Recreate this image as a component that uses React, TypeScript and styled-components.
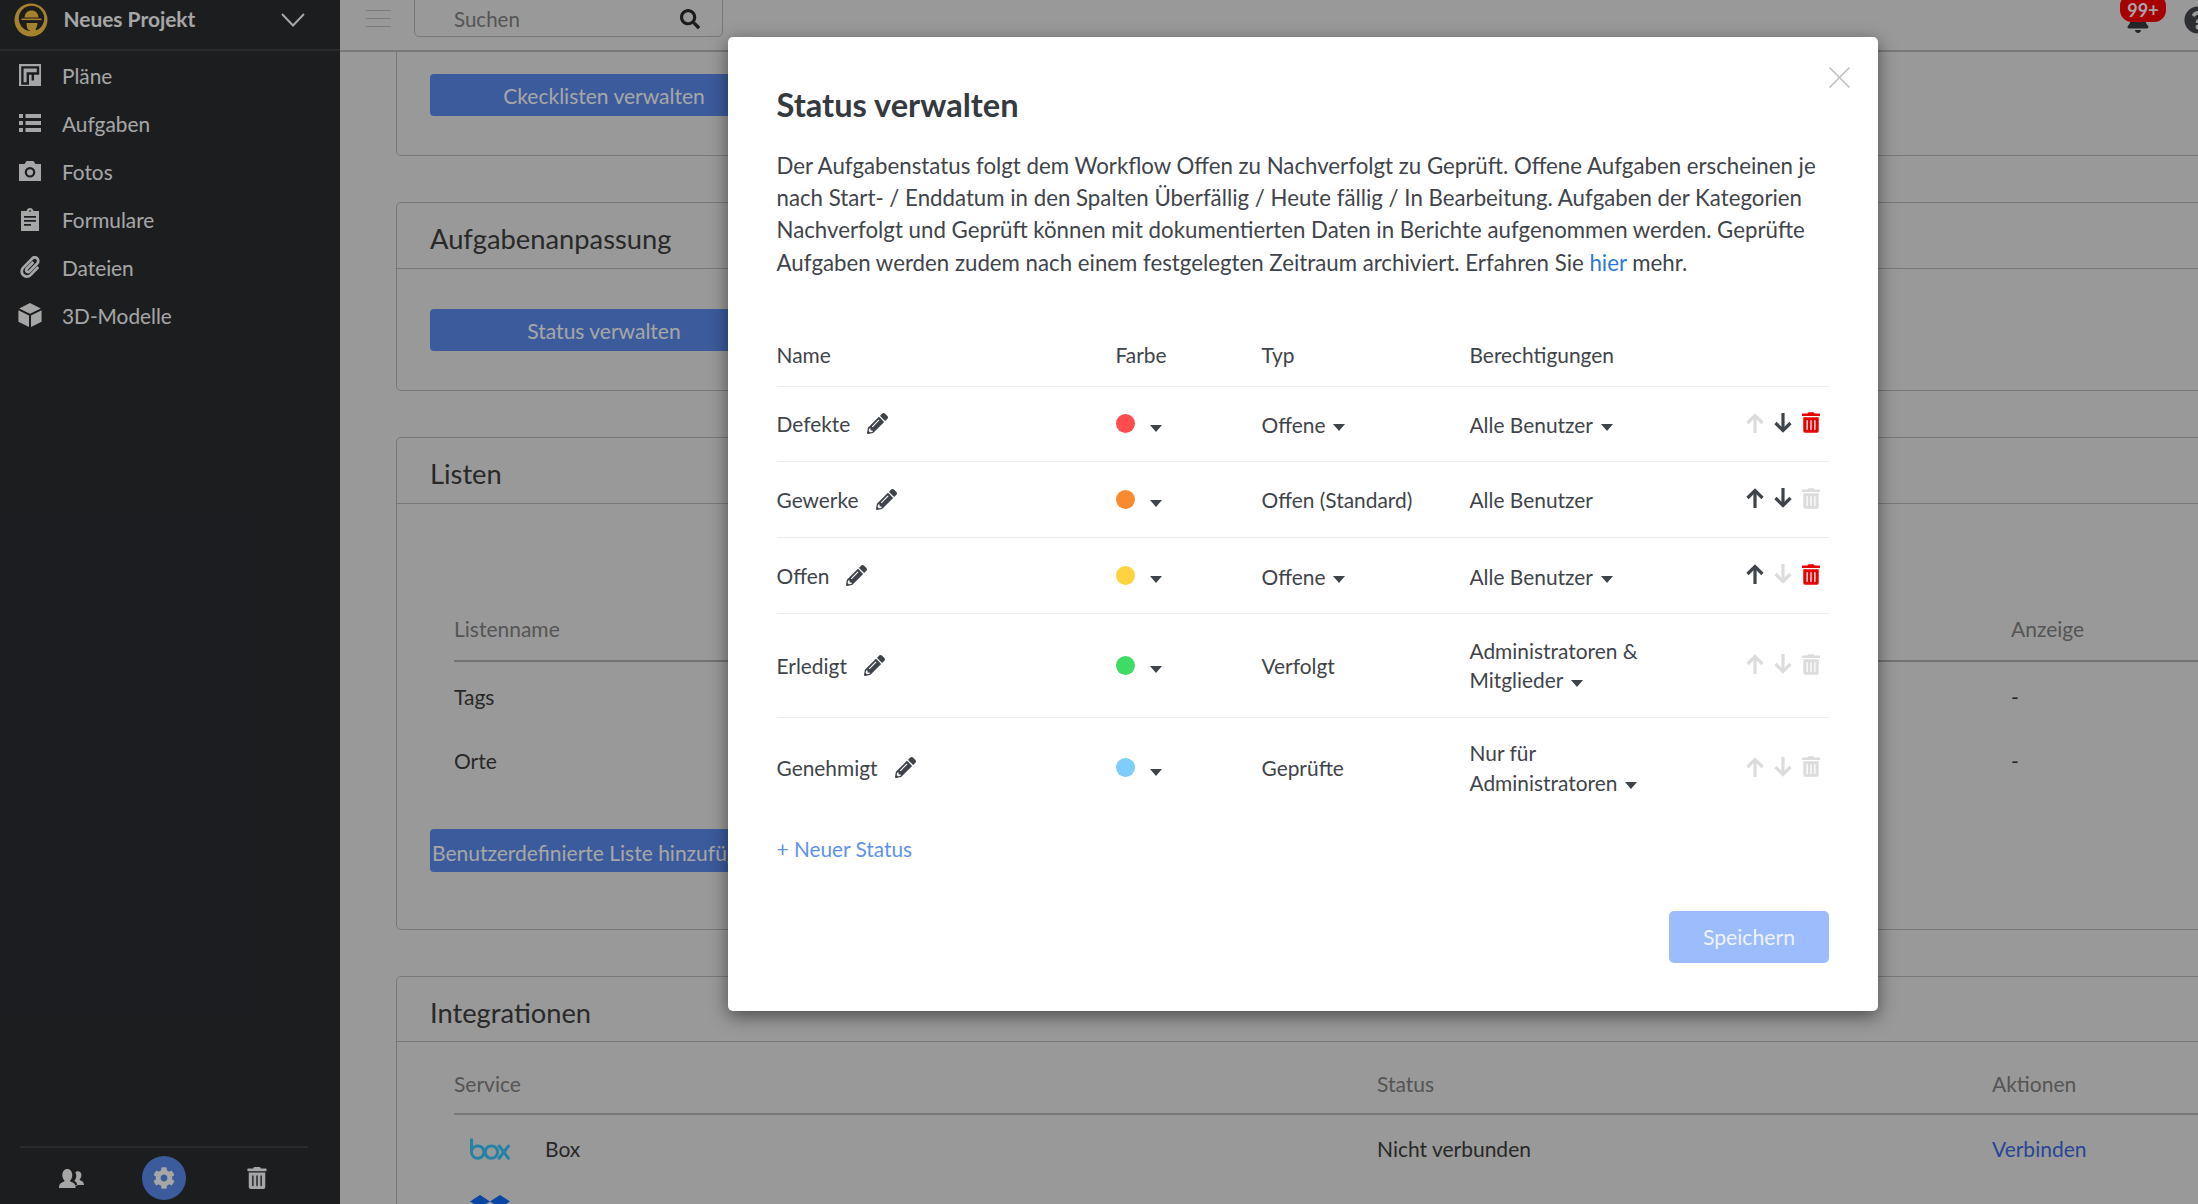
import React from "react";
import styled, { createGlobalStyle } from "styled-components";
import {
  FaBell,
  FaCog,
  FaPaperclip,
  FaPencilAlt,
  FaQuestionCircle,
  FaSearch,
  FaTrashAlt,
} from "react-icons/fa";
import { SiBox, SiDropbox } from "react-icons/si";

const Global = createGlobalStyle`
  html, body { margin: 0; padding: 0; height: 100%; overflow: hidden; background: #ebebeb; }
  body { font-family: Lato, "Liberation Sans", sans-serif; color: #3e3e3e; }
  * { box-sizing: border-box; }
`;

const Page = styled.div`
  position: relative;
  display: grid;
  grid-template-columns: 340px 1fr;
  width: 2198px;
  height: 1204px;
  overflow: hidden;
`;

/* ---------- Sidebar ---------- */
const Sidebar = styled.aside`
  display: flex;
  flex-direction: column;
  background: #2b2d31;
  color: #fff;
  height: 100%;
`;
const ProjectBar = styled.div`
  display: flex;
  align-items: center;
  height: 51px;
  padding: 0 35px 10px 14px;
  border-bottom: 2px solid #3f4146;
`;
const ProjectName = styled.span`
  margin-left: 15.5px;
  padding-bottom: 2px;
  font-size: 20.9px;
  font-weight: 700;
  flex: 1;
`;
const Nav = styled.nav`
  display: flex;
  flex-direction: column;
`;
const NavItem = styled.a`
  display: flex;
  align-items: center;
  height: 48px;
  padding-left: 17px;
  font-size: 20.8px;
  color: #fff;
`;
const NavIcon = styled.span`
  display: flex;
  justify-content: center;
  align-items: center;
  width: 26px;
  margin-right: 19px;
  font-size: 22px;
`;
const SideFooter = styled.div`
  margin: auto 32px 0 20px;
  height: 58px;
  border-top: 2px solid #3f4146;
  display: flex;
  justify-content: center;
  align-items: center;
  padding-top: 4px;
  color: #fff;
`;
const FooterSlot = styled.div<{ $active?: boolean }>`
  display: flex;
  align-items: center;
  justify-content: center;
  width: 92.5px;
  font-size: 22px;
  & > span {
    display: flex;
    width: 44px;
    height: 44px;
    align-items: center;
    justify-content: center;
    border-radius: 50%;
    background: ${(p) => (p.$active ? "#5c8df0" : "transparent")};
  }
`;

/* ---------- Main ---------- */
const Main = styled.main`
  display: flex;
  flex-direction: column;
  min-width: 0;
  height: 1204px;
  overflow: hidden;
  background: #ebebeb;
`;
const TopBar = styled.header`
  flex: none;
  display: flex;
  align-items: flex-start;
  height: 52px;
  border-bottom: 2px solid #b9b9b9;
  padding-left: 26px;
`;
const Burger = styled.div`
  display: flex;
  flex-direction: column;
  justify-content: space-between;
  width: 25px;
  height: 17px;
  margin-top: 10px;
  & > i {
    display: block;
    height: 1px;
    background: #bdbdbd;
  }
`;
const SearchBox = styled.div`
  display: flex;
  align-items: center;
  justify-content: space-between;
  width: 309px;
  height: 42px;
  margin: -5px 0 0 23px;
  padding: 5px 22px 0 39px;
  border: 1px solid #b9b9b9;
  border-radius: 5px;
  color: #838383;
  font-size: 20.5px;
  & > svg {
    color: #2a2a2a;
    font-size: 20px;
  }
`;
const BellWrap = styled.div`
  position: relative;
  margin: 9px 0 0 auto;
  width: 24px;
  height: 24px;
  font-size: 24px;
  color: #363a40;
`;
const Badge = styled.span`
  position: absolute;
  left: -6px;
  top: -15px;
  width: 46px;
  height: 28px;
  border-radius: 12px;
  background: #ff0000;
  color: #fff;
  font-size: 18px;
  font-weight: 700;
  display: flex;
  align-items: flex-end;
  justify-content: center;
  padding-bottom: 1px;
`;
const HelpIcon = styled.span`
  margin: 6px -14px 0 34px;
  font-size: 28px;
  line-height: 28px;
  height: 28px;
  color: #45494f;
`;
const Scroll = styled.div`
  flex: 1;
  min-height: 0;
  overflow: hidden;
  display: flex;
  flex-direction: column;
  gap: 46px;
  padding-left: 56px;
`;
const Card = styled.section<{ $clipTop?: boolean }>`
  flex: none;
  width: 1900px;
  border: 1px solid #b9b9b9;
  border-radius: 5px;
  margin-top: ${(p) => (p.$clipTop ? "-19px" : "0")};
`;
const CardHead = styled.h2<{ $h: number }>`
  margin: 0;
  height: ${(p) => p.$h}px;
  display: flex;
  align-items: center;
  padding: 6px 0 0 33px;
  font-size: 27.3px;
  font-weight: 400;
  color: #404040;
  border-bottom: 1px solid #b9b9b9;
`;
const CardBody = styled.div`
  padding: 40px 33px 39px;
`;
const ManageButton = styled.button`
  display: block;
  width: 348px;
  height: 42px;
  border: 0;
  border-radius: 4px;
  padding: 0 2px;
  background: #5c8df0;
  color: #fff;
  font: 400 21px Lato, "Liberation Sans", sans-serif;
  white-space: nowrap;
  overflow: hidden;
`;
const AddListButton = styled(ManageButton)`
  margin: 37px 0 18px;
  height: 43px;
  padding-top: 4px;
  text-align: left;
`;
const ListHead = styled.div`
  display: grid;
  grid-template-columns: 1557px 1fr;
  align-items: center;
  margin: 62px 0 2px 24px;
  height: 56px;
  border-bottom: 2px solid #b0b0b0;
  padding-bottom: 10px;
  font-size: 21px;
  color: #838383;
`;
const ListRow = styled.div`
  display: grid;
  grid-template-columns: 1557px 1fr;
  align-items: center;
  margin-left: 24px;
  height: 64px;
  font-size: 21px;
  color: #3e3e3e;
`;
const ServiceBody = styled.div`
  padding: 0 33px;
`;
const ServiceHead = styled.div`
  display: grid;
  grid-template-columns: 923px 615px 1fr;
  align-items: center;
  margin: 0 0 2px 24px;
  height: 73px;
  border-bottom: 2px solid #b9b9b9;
  padding-top: 11px;
  font-size: 21px;
  color: #838383;
`;
const ServiceRow = styled.div`
  display: grid;
  grid-template-columns: 923px 615px 1fr;
  align-items: center;
  margin-left: 24px;
  height: 63px;
  font-size: 21px;
  color: #3e3e3e;
`;
const ServiceName = styled.div`
  display: flex;
  align-items: center;
  gap: 35px;
  padding-left: 16px;
`;
const ServiceLogo = styled.span<{ $color: string }>`
  display: flex;
  width: 40px;
  height: 40px;
  align-items: center;
  justify-content: center;
  color: ${(p) => p.$color};
  font-size: 40px;
`;
const ConnectLink = styled.a`
  color: #3d6be6;
`;

/* ---------- Modal ---------- */
const Backdrop = styled.div`
  position: absolute;
  inset: 0;
  background: rgba(0, 0, 0, 0.35);
`;
const Modal = styled.div`
  position: absolute;
  left: 728px;
  top: 37px;
  width: 1150px;
  height: 974px;
  display: flex;
  flex-direction: column;
  padding: 0 49px 0 48.5px;
  background: #fff;
  border-radius: 5px;
  box-shadow: 0 5px 18px rgba(0, 0, 0, 0.5);
  color: #3f444a;
  font-size: 20.9px;
`;
const CloseButton = styled.button`
  position: absolute;
  right: 28px;
  top: 30px;
  width: 21px;
  height: 21px;
  padding: 0;
  border: 0;
  background: none;
  display: block;
`;
const ModalTitle = styled.h1`
  margin: 47px 0 0;
  font-size: 32.6px;
  line-height: 42px;
  font-weight: 700;
  color: #343a40;
`;
const Intro = styled.p`
  margin: 24px 0 0;
  font-size: 22.25px;
  line-height: 32.2px;
  color: #3f444a;
`;
const IntroLink = styled.a`
  color: #2f78d8;
`;
const TableHead = styled.div`
  display: grid;
  grid-template-columns: 339px 146px 208px 1fr;
  align-items: center;
  margin-top: 43px;
  height: 65px;
  border-bottom: 1px solid #ececec;
  padding-top: 1px;
`;
const Row = styled.div<{ $h: number; $last?: boolean }>`
  display: grid;
  grid-template-columns: 339px 146px 208px 1fr 90px;
  align-items: center;
  height: ${(p) => p.$h}px;
  border-bottom: ${(p) => (p.$last ? "0" : "1px solid #ececec")};
  line-height: 29.5px;
`;
const NameCell = styled.div`
  display: flex;
  align-items: center;
`;
const PencilIcon = styled.span`
  display: flex;
  margin-left: 17px;
  font-size: 21px;
  color: #3f444a;
`;
const ColorCell = styled.div`
  display: flex;
  align-items: center;
`;
const Dot = styled.span<{ $c: string }>`
  width: 19px;
  height: 19px;
  border-radius: 50%;
  background: ${(p) => p.$c};
  margin-right: 15px;
`;
const Caret = styled.i`
  display: inline-block;
  width: 0;
  height: 0;
  border-left: 6.5px solid transparent;
  border-right: 6.5px solid transparent;
  border-top: 7px solid #3f444a;
  vertical-align: middle;
  margin-left: 8px;
`;
const ColorCaret = styled(Caret)`
  margin: 9px 0 0;
`;
const TypeCell = styled.div<{ $drop: boolean }>`
  padding-top: ${(p) => (p.$drop ? "2px" : "0")};
`;
const PermCell = styled.div<{ $shift: boolean }>`
  max-width: 190px;
  padding-top: ${(p) => (p.$shift ? "2px" : "0")};
`;
const Actions = styled.div`
  display: flex;
  align-items: center;
  justify-content: flex-end;
  gap: 10px;
  padding: 0 9px 2px 0;
`;
const ArrowIcon = styled.svg<{ $on: boolean }>`
  width: 18px;
  height: 20px;
  color: ${(p) => (p.$on ? "#3f444a" : "#dcdcdc")};
`;
const TrashBtn = styled.span<{ $on: boolean }>`
  display: flex;
  color: ${(p) => (p.$on ? "#e60000" : "#dcdcdc")};
  & > svg {
    width: 18px;
    height: 21px;
  }
`;
const NewStatus = styled.a`
  margin-top: 16px;
  line-height: 30px;
  font-size: 20.8px;
  color: #5e92ef;
`;
const Footer = styled.div`
  display: flex;
  justify-content: flex-end;
  margin-top: 47px;
`;
const SaveButton = styled.button`
  width: 160px;
  height: 52px;
  border: 0;
  border-radius: 5px;
  background: #9dbcfc;
  color: #eef3ff;
  font: 400 21.2px Lato, "Liberation Sans", sans-serif;
`;

/* ---------- Drawings ---------- */
const Logo = () => (
  <svg width="34" height="34" viewBox="0 0 34 34" aria-hidden="true">
    <circle cx="17" cy="17" r="16.5" fill="#ffc846" />
    <circle cx="17.5" cy="15.5" r="12.7" fill="#2b2d31" />
    <path d="M10.500 14.500C11 10 13.500 7.500 17.500 7.500S24 10 24.500 14.500z" fill="#ffc846" />
    <path d="M7.500 15.500h20v1.600h-20z" fill="#ffc846" />
    <path d="M12.500 20h11c0 2.500-.8 4.800-2.100 6.300l3.600 4.200c-2 1.500-3.500 2.200-5.500 2.400l-4-5.400-1.500-1C13 25 12.500 22.500 12.500 20z" fill="#ffc846" />
  </svg>
);
const PlanIcon = () => (
  <svg width="22" height="22" viewBox="0 0 22 22" aria-hidden="true">
    <rect width="22" height="22" fill="currentColor" />
    <path d="M3.400 19.500V3.400H19V9.500H8.800V19.500zM13.800 9.500V16.500" fill="none" stroke="#2b2d31" strokeWidth="2.400" />
  </svg>
);
const ListIcon = () => (
  <svg width="22" height="18" viewBox="0 0 22 18" aria-hidden="true">
    <path
      fill="currentColor"
      d="M0 0h4v4H0zM6.500 0H22v4H6.500zM0 7h4v4H0zM6.500 7H22v4H6.500zM0 14h4v4H0zM6.500 14H22v4H6.500z"
    />
  </svg>
);
const CameraIcon = () => (
  <svg width="22" height="22" viewBox="0 0 22 22" aria-hidden="true">
    <path
      fill="currentColor"
      fillRule="evenodd"
      d="M0 4h5.500l2-3h7l2 3H22v17H0zM11 7a5.300 5.300 0 100 10.600A5.300 5.300 0 0011 7zm0 2.200a3.100 3.100 0 110 6.200 3.100 3.100 0 010-6.200z"
    />
  </svg>
);
const ClipboardIcon = () => (
  <svg width="18" height="23" viewBox="0 0 18 23" aria-hidden="true">
    <path
      fill="currentColor"
      fillRule="evenodd"
      d="M0 3h5.500C6 1 7.300 0 9 0s3 1 3.500 3H18v20H0zM7.600 3.600h2.800C10 2.600 9.600 2.200 9 2.200s-1 .4-1.400 1.400zM3 8v1.800h12V8zm0 4v1.800h12V12zm0 4v1.800h7V16z"
    />
  </svg>
);
const CubeIcon = () => (
  <svg width="24" height="24" viewBox="0 0 24 24" aria-hidden="true">
    <path
      fill="currentColor"
      d="M12 0l10.800 5.400L12 10.800 1.200 5.400zM.4 7.200l10.600 5.300V24L.4 18.700zM23.600 7.200L13 12.500V24l10.600-5.300z"
    />
  </svg>
);
const PeopleIcon = () => (
  <svg width="25" height="19" viewBox="0 0 25 19" aria-hidden="true">
    <path
      fill="currentColor"
      d="M15 16c.6-.1 1.400-.1 2-.1h8c0-3-1.600-3.800-3.600-4.500l-1-.7c1.300-1.300 2-2.800 2-4.400 0-2.400-1.500-4-3.600-4-1 0-1.900.4-2.500 1 .7 1 1 2.200 1 3.500 0 2-.7 3.800-2 5.200 2 .8 3 2.500 3 5z"
    />
    <path
      fill="currentColor"
      d="M0 19c0-4 1.800-5.100 4.200-6l1.600-1C4.200 10.500 3.300 8.500 3.300 6.300 3.300 2.600 5.400 0 8.300 0s5 2.600 5 6.300c0 2.200-.9 4.200-2.500 5.700l1.600 1c2.400.9 4.200 2 4.200 6z"
    />
  </svg>
);
const Arrow = ({ up, on }: { up?: boolean; on: boolean }) => (
  <ArrowIcon $on={on} viewBox="0 0 18 20" aria-hidden="true">
    <g
      fill="none"
      stroke="currentColor"
      strokeWidth="3.200"
      transform={up ? undefined : "rotate(180 9 10)"}
    >
      <path d="M9 20V2.500" />
      <path d="M1.500 10L9 2.500 16.500 10" />
    </g>
  </ArrowIcon>
);

type Status = {
  name: string;
  color: string;
  type: string;
  typeDrop: boolean;
  perm: string;
  permDrop: boolean;
  shiftPerm: boolean;
  up: boolean;
  down: boolean;
  del: boolean;
  h: number;
};

const statuses: Status[] = [
  { name: "Defekte", color: "#ff4d4f", type: "Offene", typeDrop: true, perm: "Alle Benutzer", permDrop: true, shiftPerm: true, up: false, down: true, del: true, h: 75 },
  { name: "Gewerke", color: "#fa8a2e", type: "Offen (Standard)", typeDrop: false, perm: "Alle Benutzer", permDrop: false, shiftPerm: false, up: true, down: true, del: false, h: 76 },
  { name: "Offen", color: "#ffd23f", type: "Offene", typeDrop: true, perm: "Alle Benutzer", permDrop: true, shiftPerm: true, up: true, down: false, del: true, h: 76 },
  { name: "Erledigt", color: "#3fdc63", type: "Verfolgt", typeDrop: false, perm: "Administratoren & Mitglieder", permDrop: true, shiftPerm: false, up: false, down: false, del: false, h: 104 },
  { name: "Genehmigt", color: "#7fcdfb", type: "Geprüfte", typeDrop: false, perm: "Nur für Administratoren", permDrop: true, shiftPerm: false, up: false, down: false, del: false, h: 100 },
];

const navItems: { label: string; icon: React.ReactNode }[] = [
  { label: "Pläne", icon: <PlanIcon /> },
  { label: "Aufgaben", icon: <ListIcon /> },
  { label: "Fotos", icon: <CameraIcon /> },
  { label: "Formulare", icon: <ClipboardIcon /> },
  { label: "Dateien", icon: <FaPaperclip /> },
  { label: "3D-Modelle", icon: <CubeIcon /> },
];

export default function App() {
  return (
    <>
      <Global />
      <Page>
        <Sidebar>
          <ProjectBar>
            <Logo />
            <ProjectName>Neues Projekt</ProjectName>
            <svg width="24" height="14" viewBox="0 0 24 14" aria-hidden="true">
              <path d="M1 1l11 11.500L23 1" fill="none" stroke="#fff" strokeWidth="2" />
            </svg>
          </ProjectBar>
          <Nav>
            {navItems.map((n) => (
              <NavItem key={n.label}>
                <NavIcon>{n.icon}</NavIcon>
                {n.label}
              </NavItem>
            ))}
          </Nav>
          <SideFooter>
            <FooterSlot>
              <span>
                <PeopleIcon />
              </span>
            </FooterSlot>
            <FooterSlot $active>
              <span>
                <FaCog />
              </span>
            </FooterSlot>
            <FooterSlot>
              <span>
                <FaTrashAlt />
              </span>
            </FooterSlot>
          </SideFooter>
        </Sidebar>

        <Main>
          <TopBar>
            <Burger>
              <i />
              <i />
              <i />
            </Burger>
            <SearchBox>
              Suchen
              <FaSearch />
            </SearchBox>
            <BellWrap>
              <FaBell />
              <Badge>99+</Badge>
            </BellWrap>
            <HelpIcon>
              <FaQuestionCircle />
            </HelpIcon>
          </TopBar>
          <Scroll>
            <Card $clipTop>
              <CardBody>
                <ManageButton>Ckecklisten verwalten</ManageButton>
              </CardBody>
            </Card>
            <Card>
              <CardHead $h={66}>Aufgabenanpassung</CardHead>
              <CardBody>
                <ManageButton>Status verwalten</ManageButton>
              </CardBody>
            </Card>
            <Card>
              <CardHead $h={66}>Listen</CardHead>
              <CardBody>
                <ListHead>
                  <span>Listenname</span>
                  <span>Anzeige</span>
                </ListHead>
                <ListRow>
                  <span>Tags</span>
                  <span>-</span>
                </ListRow>
                <ListRow>
                  <span>Orte</span>
                  <span>-</span>
                </ListRow>
                <AddListButton>Benutzerdefinierte Liste hinzufügen</AddListButton>
              </CardBody>
            </Card>
            <Card>
              <CardHead $h={65}>Integrationen</CardHead>
              <ServiceBody>
                <ServiceHead>
                  <span>Service</span>
                  <span>Status</span>
                  <span>Aktionen</span>
                </ServiceHead>
                <ServiceRow>
                  <ServiceName>
                    <ServiceLogo $color="#36c8ff">
                      <SiBox />
                    </ServiceLogo>
                    Box
                  </ServiceName>
                  <span>Nicht verbunden</span>
                  <ConnectLink>Verbinden</ConnectLink>
                </ServiceRow>
                <ServiceRow>
                  <ServiceName>
                    <ServiceLogo $color="#0f6cff">
                      <SiDropbox />
                    </ServiceLogo>
                    Dropbox
                  </ServiceName>
                  <span>Nicht verbunden</span>
                  <ConnectLink>Verbinden</ConnectLink>
                </ServiceRow>
              </ServiceBody>
            </Card>
          </Scroll>
        </Main>

        <Backdrop />
        <Modal>
          <CloseButton aria-label="Schließen">
            <svg width="21" height="21" viewBox="0 0 21 21" aria-hidden="true">
              <path d="M.5.5l20 20M20.5.5l-20 20" stroke="#bdbdbd" strokeWidth="1.5" fill="none" />
            </svg>
          </CloseButton>
          <ModalTitle>Status verwalten</ModalTitle>
          <Intro>
            Der Aufgabenstatus folgt dem Workflow Offen zu Nachverfolgt zu Geprüft. Offene Aufgaben erscheinen je
            nach Start- / Enddatum in den Spalten Überfällig / Heute fällig / In Bearbeitung. Aufgaben der Kategorien
            Nachverfolgt und Geprüft können mit dokumentierten Daten in Berichte aufgenommen werden. Geprüfte
            Aufgaben werden zudem nach einem festgelegten Zeitraum archiviert. Erfahren Sie <IntroLink>hier</IntroLink>{" "}
            mehr.
          </Intro>
          <TableHead>
            <span>Name</span>
            <span>Farbe</span>
            <span>Typ</span>
            <span>Berechtigungen</span>
          </TableHead>
          {statuses.map((s, i) => (
            <Row key={s.name} $h={s.h} $last={i === statuses.length - 1}>
              <NameCell>
                {s.name}
                <PencilIcon>
                  <FaPencilAlt />
                </PencilIcon>
              </NameCell>
              <ColorCell>
                <Dot $c={s.color} />
                <ColorCaret />
              </ColorCell>
              <TypeCell $drop={s.typeDrop}>
                {s.type}
                {s.typeDrop && <Caret />}
              </TypeCell>
              <PermCell $shift={s.shiftPerm}>
                {s.perm}
                {s.permDrop && <Caret />}
              </PermCell>
              <Actions>
                <Arrow up on={s.up} />
                <Arrow on={s.down} />
                <TrashBtn $on={s.del}>
                  <FaTrashAlt />
                </TrashBtn>
              </Actions>
            </Row>
          ))}
          <NewStatus>+ Neuer Status</NewStatus>
          <Footer>
            <SaveButton>Speichern</SaveButton>
          </Footer>
        </Modal>
      </Page>
    </>
  );
}
